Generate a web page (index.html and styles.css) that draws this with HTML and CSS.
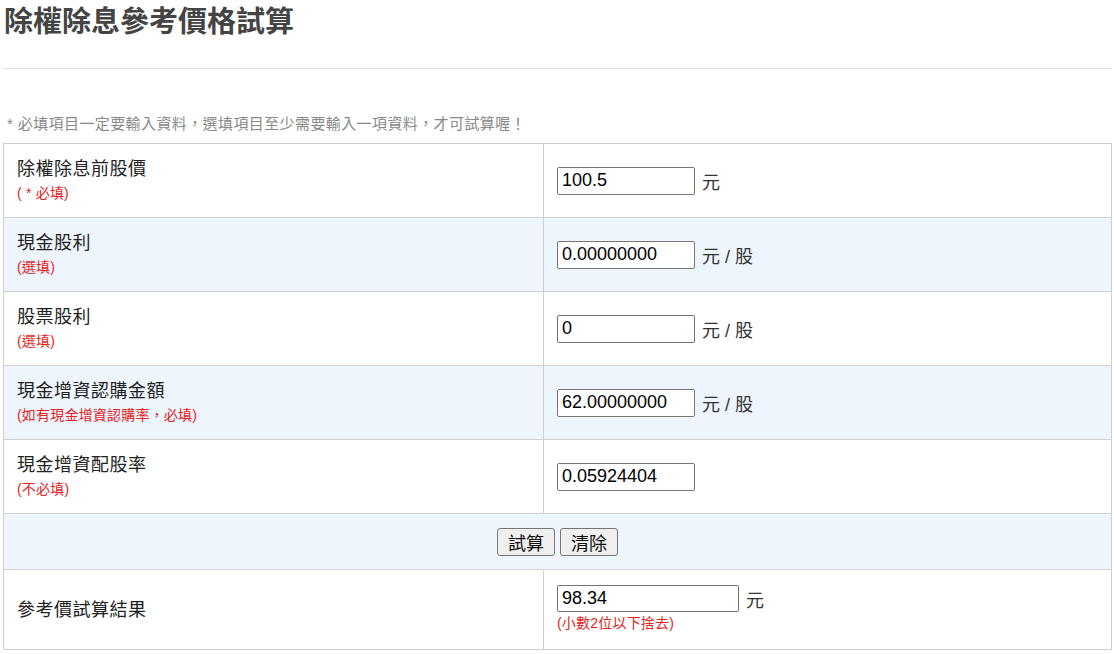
FILE: index.html
```html
<!DOCTYPE html>
<html lang="zh-Hant">
<head>
<meta charset="utf-8">
<title>除權除息參考價格試算</title>
<link rel="stylesheet" href="styles.css">
</head>
<body>
<div class="page">
  <h1 class="title">除權除息參考價格試算</h1>
  <hr class="divider">
  <p class="note">* 必填項目一定要輸入資料，選填項目至少需要輸入一項資料，才可試算喔！</p>
  <table class="calc">
    <tr class="row">
      <td class="label-cell"><div class="label">除權除息前股價</div><div class="hint">( * 必填)</div></td>
      <td class="input-cell"><input class="field" type="text" value="100.5"><span class="unit">元</span></td>
    </tr>
    <tr class="row alt">
      <td class="label-cell"><div class="label">現金股利</div><div class="hint">(選填)</div></td>
      <td class="input-cell"><input class="field" type="text" value="0.00000000"><span class="unit">元 / 股</span></td>
    </tr>
    <tr class="row">
      <td class="label-cell"><div class="label">股票股利</div><div class="hint">(選填)</div></td>
      <td class="input-cell"><input class="field" type="text" value="0"><span class="unit">元 / 股</span></td>
    </tr>
    <tr class="row alt">
      <td class="label-cell"><div class="label">現金增資認購金額</div><div class="hint">(如有現金增資認購率，必填)</div></td>
      <td class="input-cell"><input class="field" type="text" value="62.00000000"><span class="unit">元 / 股</span></td>
    </tr>
    <tr class="row">
      <td class="label-cell"><div class="label">現金增資配股率</div><div class="hint">(不必填)</div></td>
      <td class="input-cell"><input class="field" type="text" value="0.05924404"></td>
    </tr>
    <tr class="row alt btn-row">
      <td class="btn-cell" colspan="2"><button class="btn" type="button">試算</button> <button class="btn" type="button">清除</button></td>
    </tr>
    <tr class="row result-row">
      <td class="label-cell"><div class="label">參考價試算結果</div></td>
      <td class="input-cell"><div><input class="field wide" type="text" value="98.34"><span class="unit">元</span></div><div class="hint result-hint">(小數2位以下捨去)</div></td>
    </tr>
  </table>
</div>
</body>
</html>
```

FILE: styles.css
```css
html, body {
  margin: 0;
  padding: 0;
  background: #fff;
}
body {
  font-family: "Liberation Sans", "Noto Sans CJK TC", sans-serif;
  color: #222;
}
.page {
  padding: 0 2px 0 3px;
}
.title {
  margin: 0;
  padding-top: 4px;
  padding-left: 1px;
  font-size: 29px;
  line-height: 36px;
  font-weight: bold;
  color: #444;
}
.divider {
  margin: 28px 0 0 0;
  border: 0;
  border-top: 1px solid #dcdcdc;
  height: 0;
}
.note {
  margin: 45px 0 0 4px;
  font-size: 15px;
  line-height: 20px;
  color: #888;
  letter-spacing: 0.4px;
}
.calc {
  margin-top: 9px;
  width: 1109px;
  border-collapse: collapse;
  font-size: 18px;
}
.calc td {
  border: 1px solid #cfcfcf;
  vertical-align: middle;
}
.row {
  height: 74px;
  background: #fff;
}
.row.alt {
  background: #eef5fd;
}
.label-cell {
  width: 513px;
  padding: 0 13px;
}
.label {
  font-size: 18px;
  line-height: 24px;
  color: #222;
  letter-spacing: 0.5px;
}
.hint {
  font-size: 14px;
  line-height: 24px;
  color: #e52222;
  letter-spacing: 0.2px;
}
.input-cell {
  padding: 0 13px;
}
.field {
  box-sizing: border-box;
  width: 138px;
  height: 28px;
  padding: 1px 4px;
  border: 1px solid #767676;
  border-radius: 2px;
  font-family: "Liberation Sans", "Noto Sans CJK TC", sans-serif;
  font-size: 18px;
  color: #000;
  background: #fff;
  vertical-align: middle;
}
.field.wide {
  width: 182px;
  height: 27px;
}
.unit {
  margin-left: 7px;
  font-size: 18px;
  color: #333;
  vertical-align: middle;
}
.btn-row {
  height: 56px;
}
.btn-cell {
  text-align: center;
  padding: 0;
}
.btn {
  box-sizing: border-box;
  height: 28px;
  padding: 0 10px;
  border: 1px solid #767676;
  border-radius: 3px;
  background: #efefef;
  font-family: "Liberation Sans", "Noto Sans CJK TC", sans-serif;
  font-size: 18px;
  color: #111;
}
.result-row {
  height: 80px;
}
.result-hint {
  margin-top: 0;
  line-height: 22px;
}
```
